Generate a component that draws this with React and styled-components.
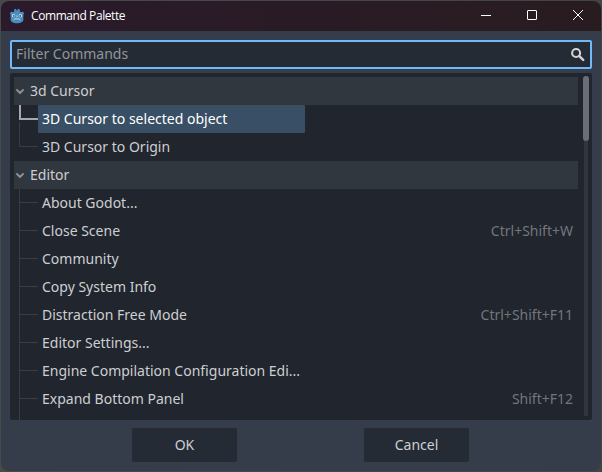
import React from "react";
import styled, { createGlobalStyle, css } from "styled-components";

const GlobalStyle = createGlobalStyle`
  * { box-sizing: border-box; }
  body { margin: 0; overflow: hidden; background: #41474a; }
`;

const Desktop = styled.div`
  width: 602px;
  height: 472px;
  padding: 1px;
  background: linear-gradient(90deg, #484a4a, #434545);
  font: 14px/28px "Noto Sans", sans-serif;
  color: #cdcfd2;
`;

const Window = styled.main`
  display: flex;
  flex-direction: column;
  width: 600px;
  height: 470px;
  overflow: hidden;
  border-radius: 8px;
  background: #363d4a;
`;

const TitleBar = styled.header`
  display: flex;
  align-items: center;
  flex: none;
  height: 30px;
  padding-left: 8px;
  background: linear-gradient(90deg, #2a1a2b, #281c20);
`;

const Title = styled.h1`
  flex: 1;
  margin: 0 0 0 6px;
  color: #fff;
  font: 400 12px/28px "Open Sans", "Noto Sans", sans-serif;
  letter-spacing: ${(p) => p.$tracking};
`;

const WindowButton = styled.button`
  display: flex;
  align-items: center;
  justify-content: center;
  width: 46px;
  height: 30px;
  padding: 0 0 2px;
  border: 0;
  background: none;
  color: #fff;
`;

const Body = styled.div`
  display: flex;
  flex-direction: column;
  flex: 1;
  padding: 9px;
`;

const Search = styled.label`
  display: flex;
  align-items: center;
  height: 29px;
  margin-bottom: 4px;
  padding: 0 4px 0 4px;
  border: 2px solid #70bafa;
  border-radius: 2px;
  background: #252b34;
`;

const SearchInput = styled.input`
  flex: 1;
  min-width: 0;
  height: 25px;
  padding: 0 0 2px;
  border: 0;
  outline: 0;
  background: none;
  color: #cdcfd2;
  font: 14px "Noto Sans", sans-serif;
  &::placeholder { color: #929599; opacity: 1; }
`;

const ListPanel = styled.section`
  display: flex;
  flex: none;
  height: 347px;
  padding: 4px 3px 0 4px;
  border-radius: 2px;
  background: #21252e;
  overflow: hidden;
`;

const Tree = styled.div`
  width: 564px;
  height: 343px;
  margin-right: 5px;
  overflow: hidden;
`;

const GroupHeader = styled.div`
  display: flex;
  align-items: center;
  height: 28px;
  padding-left: 2px;
  gap: 6px;
  background: #31373e;
`;

const Row = styled.div`
  display: flex;
  height: 28px;
  padding: 0 5px 0 5px;
`;

const Branch = styled.span`
  display: grid;
  grid-template-rows: 13px 1px 14px;
  flex: none;
  width: 19px;

  &::before {
    content: "";
    grid-row: ${(p) => (p.$last ? "1 / 3" : "1 / 4")};
    grid-column: 1;
    width: 1px;
    margin-top: ${(p) => (p.$last ? "-11px" : "0")};
    background: #393d45;
  }
  &::after {
    content: "";
    grid-row: 2;
    grid-column: 1;
    background: #393d45;
  }

  ${(p) => p.$active && css`
    grid-template-rows: 13px 2px 13px;
    &::before { width: 2px; grid-row: 1 / 3; background: #a6a8ab; }
    &::after { background: #a6a8ab; }
  `}
`;

const Label = styled.span`
  width: 267px;
  padding-left: 4px;
  border-radius: 1px;
  white-space: nowrap;
  background: ${(p) => (p.$active ? "#394f66" : "transparent")};
  color: ${(p) => (p.$active ? "#fff" : "#cdcfd2")};
`;

const Shortcut = styled.span`
  margin-left: auto;
  color: #73767c;
`;

const ScrollTrack = styled.div`
  width: 6px;
  height: 340px;
  margin-top: -1px;
  background: linear-gradient(#31353e, #31353e) center / 4px 100% no-repeat;
`;

const ScrollThumb = styled.div`
  height: 65px;
  border-radius: 3px;
  background: #6b6e74;
`;

const Actions = styled.footer`
  display: flex;
  gap: 127px;
  padding: 8px 0 0 122px;
`;

const ActionButton = styled.button`
  width: 105px;
  height: 34px;
  padding: 0 0 1px;
  border: 0;
  border-radius: 2px;
  background: #252b34;
  color: #cdcfd2;
  font: 14px "Noto Sans", sans-serif;
`;

const Logo = () => (
  <svg width="16" height="16" viewBox="0 0 16 16">
    <path d="M.8 5.3 2.4 3.6l1.4.7L5.2 3.5V1.3L7 .8l.6 1.7h.8L9 .8l1.8.5v2.2l1.4.8 1.4-.7 1.6 1.7-.8 1.5v4.7c0 2.5-2.9 3.7-6.4 3.7s-6.4-1.2-6.4-3.7V6.8Z" fill="#478cbf" />
    <path d="M4.7 11.9 6 10.9h4l1.3 1" fill="none" stroke="#c3d9e8" strokeWidth="1" />
    <path d="M8 7.4v1.8" stroke="#c3d9e8" strokeWidth="1" />
    <circle cx="4.6" cy="7.8" r="1.7" fill="#d4dfe6" />
    <circle cx="11.4" cy="7.8" r="1.7" fill="#d4dfe6" />
    <circle cx="4.8" cy="7.9" r=".9" fill="#414a55" />
    <circle cx="11.2" cy="7.9" r=".9" fill="#414a55" />
  </svg>
);

const Chevron = () => (
  <svg width="8" height="8" viewBox="0 0 8 8">
    <path d="m1 3 3 3 3-3" fill="none" stroke="#8d9095" strokeWidth="1.9" strokeLinecap="round" strokeLinejoin="round" />
  </svg>
);

const SearchIcon = () => (
  <svg width="16" height="16" viewBox="0 0 16 16">
    <circle cx="6.1" cy="6" r="4" fill="none" stroke="#d2d2d2" strokeWidth="2.1" />
    <path d="m9.3 9.2 3.9 3.6" stroke="#d2d2d2" strokeWidth="2.5" strokeLinecap="round" />
  </svg>
);

const controls = [
  ["Minimize", "M1 6.5h10"],
  ["Maximize", "M2 1.5h8a.5.5 0 0 1 .5.5v8a.5.5 0 0 1-.5.5H2a.5.5 0 0 1-.5-.5V2a.5.5 0 0 1 .5-.5Z"],
  ["Close", "m1 1 10 10M11 1 1 11"],
];

const groups = [
  {
    name: "3d Cursor",
    items: [["3D Cursor to selected object", "", true], ["3D Cursor to Origin"]],
  },
  {
    name: "Editor",
    open: true,
    items: [
      ["About Godot..."],
      ["Close Scene", "Ctrl+Shift+W"],
      ["Community"],
      ["Copy System Info"],
      ["Distraction Free Mode", "Ctrl+Shift+F11"],
      ["Editor Settings..."],
      ["Engine Compilation Configuration Edi..."],
      ["Expand Bottom Panel", "Shift+F12"],
      [""],
    ],
  },
];

export default function App() {
  return (
    <Desktop>
      <GlobalStyle />
      <Window>
        <TitleBar>
          <Logo />
          <Title $tracking="-0.42px">Command Palette</Title>
          {controls.map(([name, d]) => (
            <WindowButton key={name} aria-label={name}>
              <svg width="12" height="12" viewBox="0 0 12 12">
                <path d={d} fill="none" stroke="currentColor" />
              </svg>
            </WindowButton>
          ))}
        </TitleBar>
        <Body>
          <Search>
            <SearchInput placeholder="Filter Commands" />
            <SearchIcon />
          </Search>
          <ListPanel>
            <Tree>
              {groups.map((group) => (
                <div key={group.name}>
                  <GroupHeader><Chevron />{group.name}</GroupHeader>
                  {group.items.map(([text, shortcut, active], i) => (
                    <Row key={text}>
                      <Branch $active={active} $last={!group.open && i === group.items.length - 1} />
                      <Label $active={active}>{text}</Label>
                      {shortcut && <Shortcut>{shortcut}</Shortcut>}
                    </Row>
                  ))}
                </div>
              ))}
            </Tree>
            <ScrollTrack><ScrollThumb /></ScrollTrack>
          </ListPanel>
          <Actions>
            <ActionButton>OK</ActionButton>
            <ActionButton>Cancel</ActionButton>
          </Actions>
        </Body>
      </Window>
    </Desktop>
  );
}
